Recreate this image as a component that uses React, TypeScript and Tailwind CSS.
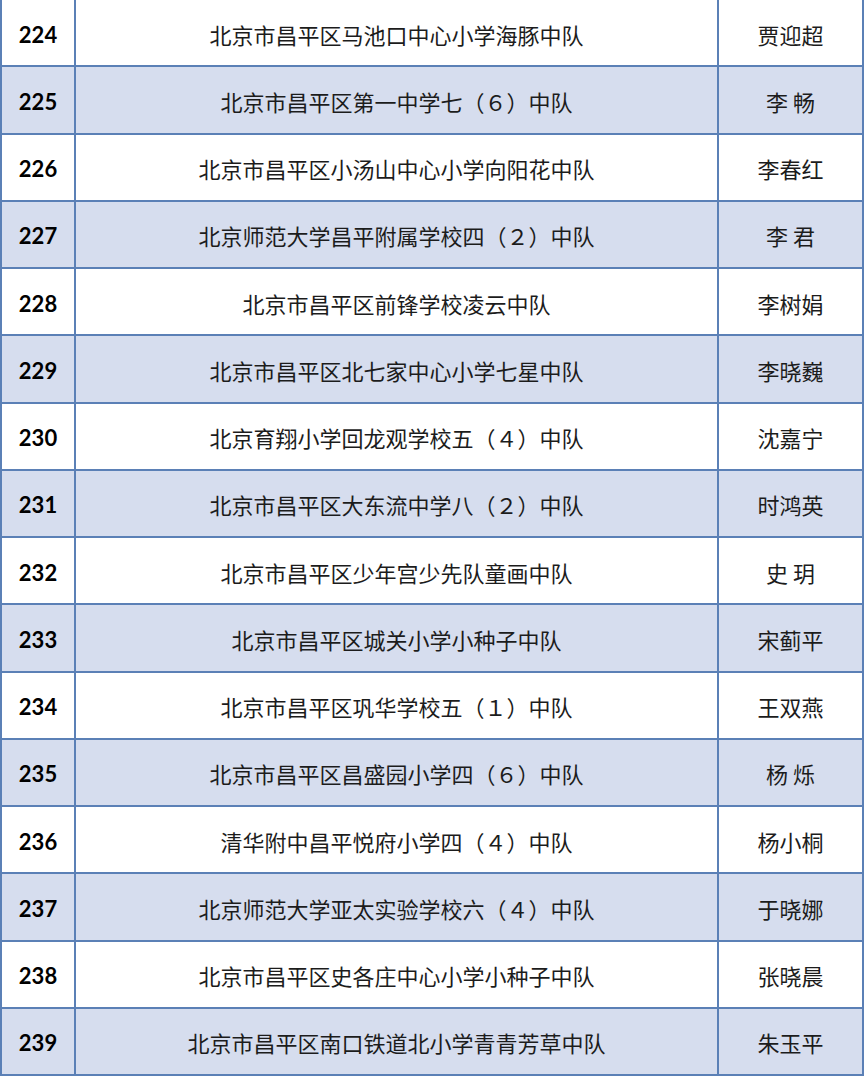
const ROWS = [
  { no: 224, team: '北京市昌平区马池口中心小学海豚中队', name: '贾迎超' },
  { no: 225, team: '北京市昌平区第一中学七（６）中队', name: '李 畅' },
  { no: 226, team: '北京市昌平区小汤山中心小学向阳花中队', name: '李春红' },
  { no: 227, team: '北京师范大学昌平附属学校四（２）中队', name: '李 君' },
  { no: 228, team: '北京市昌平区前锋学校凌云中队', name: '李树娟' },
  { no: 229, team: '北京市昌平区北七家中心小学七星中队', name: '李晓巍' },
  { no: 230, team: '北京育翔小学回龙观学校五（４）中队', name: '沈嘉宁' },
  { no: 231, team: '北京市昌平区大东流中学八（２）中队', name: '时鸿英' },
  { no: 232, team: '北京市昌平区少年宫少先队童画中队', name: '史 玥' },
  { no: 233, team: '北京市昌平区城关小学小种子中队', name: '宋蓟平' },
  { no: 234, team: '北京市昌平区巩华学校五（１）中队', name: '王双燕' },
  { no: 235, team: '北京市昌平区昌盛园小学四（６）中队', name: '杨 烁' },
  { no: 236, team: '清华附中昌平悦府小学四（４）中队', name: '杨小桐' },
  { no: 237, team: '北京师范大学亚太实验学校六（４）中队', name: '于晓娜' },
  { no: 238, team: '北京市昌平区史各庄中心小学小种子中队', name: '张晓晨' },
  { no: 239, team: '北京市昌平区南口铁道北小学青青芳草中队', name: '朱玉平' },
];

export default function App() {
  return (
    <div className="w-[864px] h-[1076px] bg-white overflow-hidden">
      <div className="flex flex-col border-l-2 border-r-2 border-[#5b80b6]">
        {ROWS.map((row, i) => (
          <div
            key={row.no}
            className={`flex h-[67.25px] border-b-2 border-[#5b80b6] ${
              i % 2 === 1 ? 'bg-[#d6ddee]' : 'bg-white'
            }`}
          >
            <div className="w-[72px] pt-[3px] flex items-center justify-center font-['Lato','Liberation_Sans',sans-serif] font-bold text-[22px] text-black">
              {row.no}
            </div>
            <div className="flex-1 pt-[3px] flex items-center justify-center border-l-2 border-r-2 border-[#5b80b6] font-['Noto_Sans_CJK_SC',sans-serif] text-[22px] text-[#1c1c1c]">
              {row.team}
            </div>
            <div className="w-[143px] pt-[3px] flex items-center justify-center font-['Noto_Sans_CJK_SC',sans-serif] text-[22px] text-[#1c1c1c] whitespace-pre">
              {row.name}
            </div>
          </div>
        ))}
      </div>
    </div>
  );
}
